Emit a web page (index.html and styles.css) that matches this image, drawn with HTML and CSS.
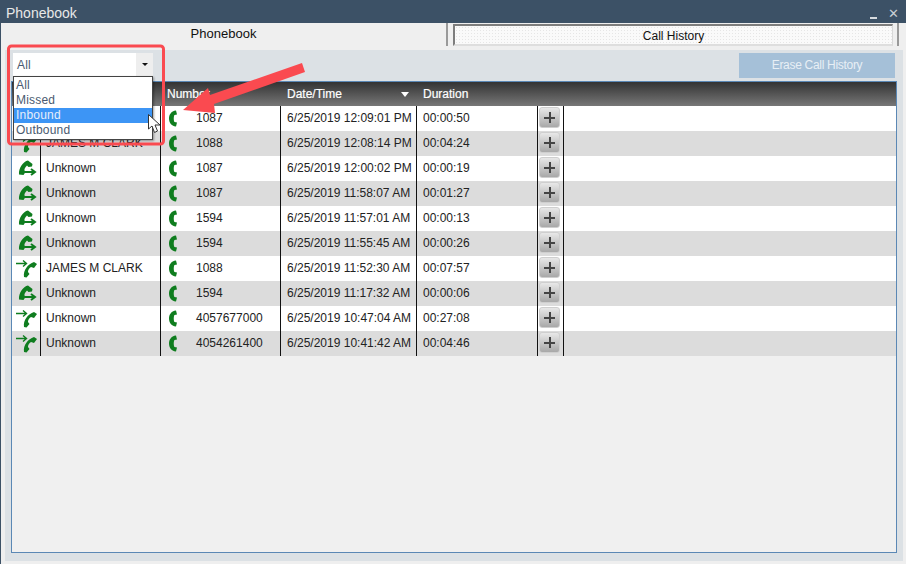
FILE: index.html
```html
<!DOCTYPE html>
<html lang="en">
<head>
  <meta charset="UTF-8" />
  <title>Phonebook</title>
  <link rel="stylesheet" href="styles.css">
</head>
<body>
  <svg class="defs" width="0" height="0">
    <symbol id="ic-out" viewBox="0 0 20 20">
      <path d="M2 15.5 C1.5 9 6 2.5 11 1.5 L15.5 5 L15 7.5 L11.5 8 L10 6.5 C8.5 8 7 10 7.5 11.5 L8.5 13 L6.5 16 Z" fill="#0f7d1f"/>
      <path d="M8 13 H17 M14 10 L18 13 L14 16" fill="none" stroke="#0f7d1f" stroke-width="2"/>
    </symbol>
    <symbol id="ic-in" viewBox="0 0 24 20">
      <path d="M2 4.5 H12 M9 1.5 L12.5 4.5 L9 7.5" fill="none" stroke="#0f7d1f" stroke-width="1.4"/>
      <path d="M10 18 C9 11 14 5 20 3 L23 5 L20 9 L17 8 C15 9 14 11 14 13 L15.5 15 L12.5 18.5 Z" fill="#0f7d1f"/>
    </symbol>
    <symbol id="ic-phone" viewBox="0 0 8 17">
      <path d="M7 0.5 C2 1 0 5 0 8.5 C0 12 2 16 7 16.5 L8 12.5 L5.5 12 C4.5 11 4.5 6 5.5 5 L8 4.5 Z" fill="#0f7d1f"/>
    </symbol>
  </svg>

  <div class="window">
    <div class="titlebar">
      <span class="title">Phonebook</span>
      <span class="winbtn min"></span>
      <span class="winbtn close">✕</span>
    </div>

    <div class="tabs">
      <div class="tab tab-on">Phonebook</div>
      <div class="tab tab-off"><div class="tab-inner">Call History</div></div>
    </div>

    <div class="panel">
      <div class="toolbar">
        <div class="select">
          <span class="select-val">All</span>
          <span class="select-arrow"></span>
        </div>
        <button class="erase">Erase Call History</button>
      </div>

      <div class="calls">
        <div class="row head">
          <div class="cell"></div>
          <div class="cell"></div>
          <div class="cell cell-pad">Number</div>
          <div class="cell cell-pad">Date/Time<span class="sort"></span></div>
          <div class="cell cell-pad">Duration</div>
          <div class="cell"></div>
        </div>

        <div class="row">
          <div class="cell cell-icon"><svg class="icon-in"><use href="#ic-in"/></svg></div>
          <div class="cell cell-name"></div>
          <div class="cell cell-num"><svg class="icon-phone"><use href="#ic-phone"/></svg>1087</div>
          <div class="cell cell-pad">6/25/2019 12:09:01 PM</div>
          <div class="cell cell-pad">00:00:50</div>
          <div class="cell cell-btn"><span class="plus"></span></div>
        </div>
        <div class="row">
          <div class="cell cell-icon"><svg class="icon-in"><use href="#ic-in"/></svg></div>
          <div class="cell cell-name">JAMES M CLARK</div>
          <div class="cell cell-num"><svg class="icon-phone"><use href="#ic-phone"/></svg>1088</div>
          <div class="cell cell-pad">6/25/2019 12:08:14 PM</div>
          <div class="cell cell-pad">00:04:24</div>
          <div class="cell cell-btn"><span class="plus"></span></div>
        </div>
        <div class="row">
          <div class="cell cell-icon"><svg class="icon-out"><use href="#ic-out"/></svg></div>
          <div class="cell cell-name">Unknown</div>
          <div class="cell cell-num"><svg class="icon-phone"><use href="#ic-phone"/></svg>1087</div>
          <div class="cell cell-pad">6/25/2019 12:00:02 PM</div>
          <div class="cell cell-pad">00:00:19</div>
          <div class="cell cell-btn"><span class="plus"></span></div>
        </div>
        <div class="row">
          <div class="cell cell-icon"><svg class="icon-out"><use href="#ic-out"/></svg></div>
          <div class="cell cell-name">Unknown</div>
          <div class="cell cell-num"><svg class="icon-phone"><use href="#ic-phone"/></svg>1087</div>
          <div class="cell cell-pad">6/25/2019 11:58:07 AM</div>
          <div class="cell cell-pad">00:01:27</div>
          <div class="cell cell-btn"><span class="plus"></span></div>
        </div>
        <div class="row">
          <div class="cell cell-icon"><svg class="icon-out"><use href="#ic-out"/></svg></div>
          <div class="cell cell-name">Unknown</div>
          <div class="cell cell-num"><svg class="icon-phone"><use href="#ic-phone"/></svg>1594</div>
          <div class="cell cell-pad">6/25/2019 11:57:01 AM</div>
          <div class="cell cell-pad">00:00:13</div>
          <div class="cell cell-btn"><span class="plus"></span></div>
        </div>
        <div class="row">
          <div class="cell cell-icon"><svg class="icon-out"><use href="#ic-out"/></svg></div>
          <div class="cell cell-name">Unknown</div>
          <div class="cell cell-num"><svg class="icon-phone"><use href="#ic-phone"/></svg>1594</div>
          <div class="cell cell-pad">6/25/2019 11:55:45 AM</div>
          <div class="cell cell-pad">00:00:26</div>
          <div class="cell cell-btn"><span class="plus"></span></div>
        </div>
        <div class="row">
          <div class="cell cell-icon"><svg class="icon-in"><use href="#ic-in"/></svg></div>
          <div class="cell cell-name">JAMES M CLARK</div>
          <div class="cell cell-num"><svg class="icon-phone"><use href="#ic-phone"/></svg>1088</div>
          <div class="cell cell-pad">6/25/2019 11:52:30 AM</div>
          <div class="cell cell-pad">00:07:57</div>
          <div class="cell cell-btn"><span class="plus"></span></div>
        </div>
        <div class="row">
          <div class="cell cell-icon"><svg class="icon-out"><use href="#ic-out"/></svg></div>
          <div class="cell cell-name">Unknown</div>
          <div class="cell cell-num"><svg class="icon-phone"><use href="#ic-phone"/></svg>1594</div>
          <div class="cell cell-pad">6/25/2019 11:17:32 AM</div>
          <div class="cell cell-pad">00:00:06</div>
          <div class="cell cell-btn"><span class="plus"></span></div>
        </div>
        <div class="row">
          <div class="cell cell-icon"><svg class="icon-in"><use href="#ic-in"/></svg></div>
          <div class="cell cell-name">Unknown</div>
          <div class="cell cell-num"><svg class="icon-phone"><use href="#ic-phone"/></svg>4057677000</div>
          <div class="cell cell-pad">6/25/2019 10:47:04 AM</div>
          <div class="cell cell-pad">00:27:08</div>
          <div class="cell cell-btn"><span class="plus"></span></div>
        </div>
        <div class="row">
          <div class="cell cell-icon"><svg class="icon-in"><use href="#ic-in"/></svg></div>
          <div class="cell cell-name">Unknown</div>
          <div class="cell cell-num"><svg class="icon-phone"><use href="#ic-phone"/></svg>4054261400</div>
          <div class="cell cell-pad">6/25/2019 10:41:42 AM</div>
          <div class="cell cell-pad">00:04:46</div>
          <div class="cell cell-btn"><span class="plus"></span></div>
        </div>
      </div>
    </div>
  </div>

  <ul class="options">
    <li>All</li>
    <li>Missed</li>
    <li class="picked">Inbound</li>
    <li>Outbound</li>
  </ul>

  <!-- red callout drawn on top of the screenshot -->
  <svg class="callout" width="906" height="564" viewBox="0 0 906 564">
    <rect x="8.5" y="46" width="155" height="98" rx="3" fill="none" stroke="#fa4a50" stroke-width="3"/>
    <polygon points="183,110 208,88 210,95 302,63 305,72 214,104 215,113" fill="#fa4a50"/>
    <path d="M148.5 114.5 V129 L152 126 L154.5 132.5 L157.5 131 L155 125 L160 125 Z" fill="#fff" stroke="#333" stroke-width="1"/>
  </svg>
</body>
</html>
```

FILE: styles.css
```css
html, body {
  margin: 0;
  height: 100%;
}

body {
  font-family: "Liberation Sans", Arial, sans-serif;
  font-size: 12px;
  color: #222;
  background-color: #efefef;
  overflow: hidden;
  position: relative;
}

.defs {
  display: block;
  height: 0;
}

.window {
  display: flex;
  flex-direction: column;
  height: 564px;
  border-left: 1px solid #3c5166;
  box-sizing: border-box;
}

.titlebar {
  display: flex;
  align-items: center;
  height: 23px;
  margin-left: -1px;
  padding: 0 7px 0 6px;
  background-color: #3c5166;
  color: #e8e8e8;
  font-size: 14px;
}

.title {
  flex: 1;
  margin-top: 3px;
}

.winbtn {
  color: #c8ced4;
}

.min {
  width: 7px;
  height: 2px;
  margin: 12px 11px 0 0;
  background-color: #d6dade;
}

.close {
  width: 11px;
  margin-top: 5px;
  font-family: "DejaVu Sans", sans-serif;
  font-size: 13px;
  line-height: 12px;
}

.tabs {
  display: flex;
  height: 27px;
}

.tab {
  box-sizing: border-box;
  text-align: center;
}

.tab-on {
  width: 447px;
  height: 23px;
  padding-top: 3px;
  border-right: 2px solid #999;
  font-size: 13px;
  color: #111;
}

.tab-off {
  width: 451px;
  height: 23px;
  padding: 1px 4px 0 5px;
  border-right: 2px solid #999;
}

.tab-inner {
  height: 22px;
  box-sizing: border-box;
  padding-top: 3px;
  border-top: 2px solid #7d7d7d;
  border-left: 2px solid #7d7d7d;
  border-right: 1px solid #d8d8d8;
  border-bottom: 2px solid #dedede;
  background-color: #fafafa;
  background-image: radial-gradient(#e6e6e6 0.5px, transparent 0.6px);
  background-size: 3px 3px;
  color: #111;
}

.panel {
  width: 898px;
  height: 511px;
  margin-left: 4px;
  box-sizing: border-box;
  padding: 3px 6px 8px 6px;
  background-color: #dce1e5;
  display: flex;
  flex-direction: column;
}

.toolbar {
  display: flex;
  justify-content: space-between;
  align-items: flex-start;
  height: 28px;
  padding: 0 2px;
  box-sizing: border-box;
}

.select {
  display: flex;
  width: 140px;
  height: 23px;
  background-color: #fff;
}

.select-val {
  flex: 1;
  padding: 5px 0 0 4px;
  color: #4a5a70;
  letter-spacing: 0.2px;
}

.select-arrow {
  width: 17px;
  background-color: #eeeeee;
  position: relative;
}

.select-arrow::after {
  content: "";
  position: absolute;
  left: 6px;
  top: 10px;
  border-left: 3px solid transparent;
  border-right: 3px solid transparent;
  border-top: 3px solid #111;
}

.erase {
  width: 156px;
  height: 25px;
  padding: 0 0 2px 0;
  border: none;
  background-color: #a5c0d8;
  color: #e8eff5;
  font-family: inherit;
  font-size: 12px;
  letter-spacing: -0.3px;
}

.calls {
  flex: 1;
  border: 1px solid #5b88b5;
  background-color: #f0f0f0;
}

.row {
  display: grid;
  grid-template-columns: 29px 120px 120px 136px 121px 26px 1fr;
  height: 25px;
  background-color: #fff;
}

.row:nth-child(odd) {
  background-color: #dcdcdc;
}

.row.head {
  height: 24px;
  background: linear-gradient(#333333, #777777);
  color: #fff;
  -webkit-text-stroke: 0.2px #fff;
}

.cell {
  box-sizing: border-box;
  line-height: 24px;
  border-right: 1px solid #111;
  white-space: nowrap;
  position: relative;
}

.row.head .cell {
  border-right: none;
}

.cell-pad {
  padding-left: 6px;
}

.cell-name {
  padding-left: 5px;
}

.cell-num {
  display: flex;
  align-items: flex-start;
  padding-left: 8px;
}

.cell-icon {
  display: flex;
  align-items: center;
}

.cell-btn {
  padding: 1px 0 0 1px;
}

.icon-out {
  width: 20px;
  height: 20px;
  margin-left: 5px;
}

.icon-in {
  width: 24px;
  height: 20px;
  margin-left: 2px;
}

.icon-phone {
  width: 8px;
  height: 17px;
  margin: 4px 19px 0 0;
}

.sort {
  position: absolute;
  left: 120px;
  top: 10px;
  border-left: 4px solid transparent;
  border-right: 4px solid transparent;
  border-top: 5px solid #fff;
}

.plus {
  display: block;
  width: 21px;
  height: 21px;
  box-sizing: border-box;
  border: 1px solid #cfcfcf;
  border-radius: 3px;
  background-image:
    linear-gradient(#444, #444),
    linear-gradient(#444, #444),
    linear-gradient(#e8e8e8, #a8a8a8);
  background-size: 11px 2px, 2px 11px, 100% 100%;
  background-position: center, center, center;
  background-repeat: no-repeat;
}

/* open dropdown, sits over the table */
.options {
  position: absolute;
  left: 13px;
  top: 76px;
  width: 140px;
  box-sizing: border-box;
  margin: 0;
  padding: 1px 0;
  list-style: none;
  background-color: #fff;
  border: 1px solid #444;
  box-shadow: 1px 1px 2px rgba(0, 0, 0, 0.35);
  color: #4a5a70;
  letter-spacing: 0.2px;
}

.options li {
  height: 15px;
  padding-left: 2px;
  line-height: 15px;
}

.options .picked {
  background-color: #3d95f5;
  color: #e6eefa;
}

.callout {
  position: absolute;
  left: 0;
  top: 0;
  pointer-events: none;
}
```
